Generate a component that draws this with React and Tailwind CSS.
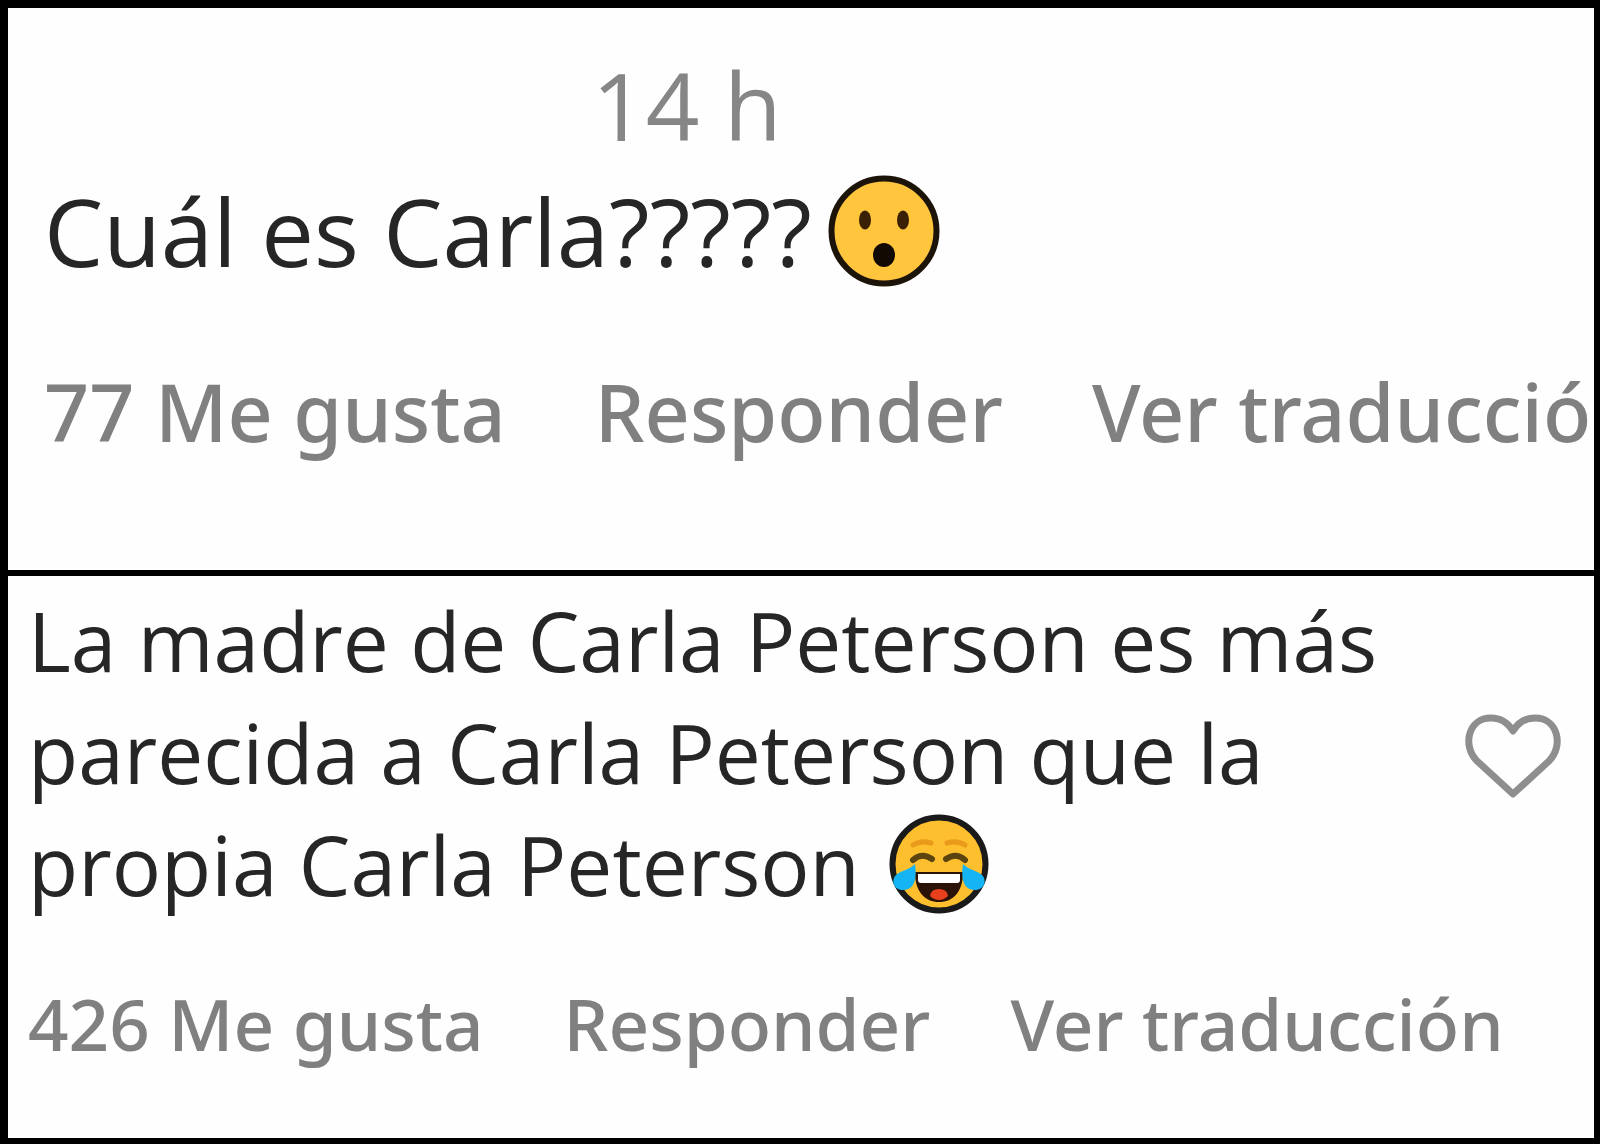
import React, { useState } from 'react';

// Cara sorprendida
const SurprisedFace = ({ className }) => (
  <svg className={className} viewBox="0 0 112 112" role="img" aria-label="Cara sorprendida">
    <circle cx="56" cy="56" r="52.5" fill="#ffc53d" stroke="#1c1408" strokeWidth="6" />
    <ellipse cx="37" cy="45" rx="6" ry="9.5" fill="#3a2105" />
    <ellipse cx="75" cy="45" rx="6" ry="9.5" fill="#3a2105" />
    <ellipse cx="56" cy="80" rx="11" ry="12" fill="#120a02" />
  </svg>
);

// Cara llorando de risa
const JoyFace = ({ className }) => (
  <svg className={className} viewBox="0 0 100 100" role="img" aria-label="Cara llorando de risa">
    <circle cx="50" cy="50" r="46.5" fill="#fdbf2d" stroke="#1a1a1a" strokeWidth="6" />
    <path d="M24 31q8-5 18-2M76 31q-8-5-18-2" fill="none" stroke="#ea9a1a" strokeWidth="5" strokeLinecap="round" />
    <path d="M24 46q9-8 19-1M76 46q-9-8-19-1" fill="none" stroke="#5b4410" strokeWidth="6" strokeLinecap="round" />
    <path d="M26 58h48c0 20-10 30-24 30S26 78 26 58z" fill="#2a1206" />
    <path d="M29 60h42v6q0 3-3 3H32q-3 0-3-3z" fill="#fff" />
    <path d="M41 82q1-7 9-7t9 7q-4 4-9 4t-9-4z" fill="#e8401c" />
    <path d="M26 50c2 14 0 26-12 26-10 0-12-10-7-15 5-5 12-4 19-11z" fill="#14b4f5" />
    <path d="M74 50c-2 14 0 26 12 26 10 0 12-10 7-15-5-5-12-4-19-11z" fill="#14b4f5" />
  </svg>
);

const HeartIcon = ({ className }) => (
  <svg className={className} viewBox="0 0 98 86" fill="none" aria-hidden="true">
    <path
      d="M49 81L13 48C-2 33 4 5 27 5c11 0 17 5 22 13C54 10 60 5 71 5c23 0 29 28 14 43z"
      stroke="#8e8e8e"
      strokeWidth="7"
      strokeLinejoin="round"
    />
  </svg>
);

const Actions = ({ items, className }) => (
  <div className={`flex font-['Noto_Sans',sans-serif] font-medium whitespace-nowrap text-[#808080] ${className}`}>
    {items.map((label) => (
      <button key={label} type="button" className="shrink-0 cursor-pointer">
        {label}
      </button>
    ))}
  </div>
);

export default function App() {
  const [liked, setLiked] = useState(false);

  return (
    <main className="grid min-h-screen grid-rows-2 gap-1.5 bg-black pt-2 pr-1.5 pb-1.5 pl-2 font-['Open_Sans','Noto_Sans',sans-serif]">
      <article className="overflow-hidden bg-[#fefefe] pt-[34px] pl-9">
        <time className="block pl-[548px] text-[94px] leading-[126px] text-[#868686]">14 h</time>
        <p className="flex items-center text-[94px] leading-[126px] whitespace-nowrap text-[#262626]">
          Cuál es Carla?????
          <SurprisedFace className="ml-4 size-28 shrink-0" />
        </p>
        <Actions
          items={['77 Me gusta', 'Responder', 'Ver traducció']}
          className="mt-[66px] gap-[89px] text-[79px] leading-[104px]"
        />
      </article>

      <article className="overflow-hidden bg-[#fefefe] pt-2 pl-5">
        <div className="flex items-center justify-between pr-8">
          <p className="text-[82px] leading-[112px] whitespace-nowrap text-[#262626]">
            La madre de Carla Peterson es más
            <br />
            parecida a Carla Peterson que la
            <br />
            propia Carla Peterson <JoyFace className="ml-2 inline-block size-[100px] align-[-18px]" />
          </p>
          <button
            type="button"
            aria-label="Me gusta"
            aria-pressed={liked}
            onClick={() => setLiked(!liked)}
            className="mt-2 shrink-0 cursor-pointer"
          >
            <HeartIcon className="h-[86px] w-[98px]" />
          </button>
        </div>
        <Actions
          items={['426 Me gusta', 'Responder', 'Ver traducción']}
          className="mt-14 gap-[80px] text-[71px] leading-[96px]"
        />
      </article>
    </main>
  );
}
